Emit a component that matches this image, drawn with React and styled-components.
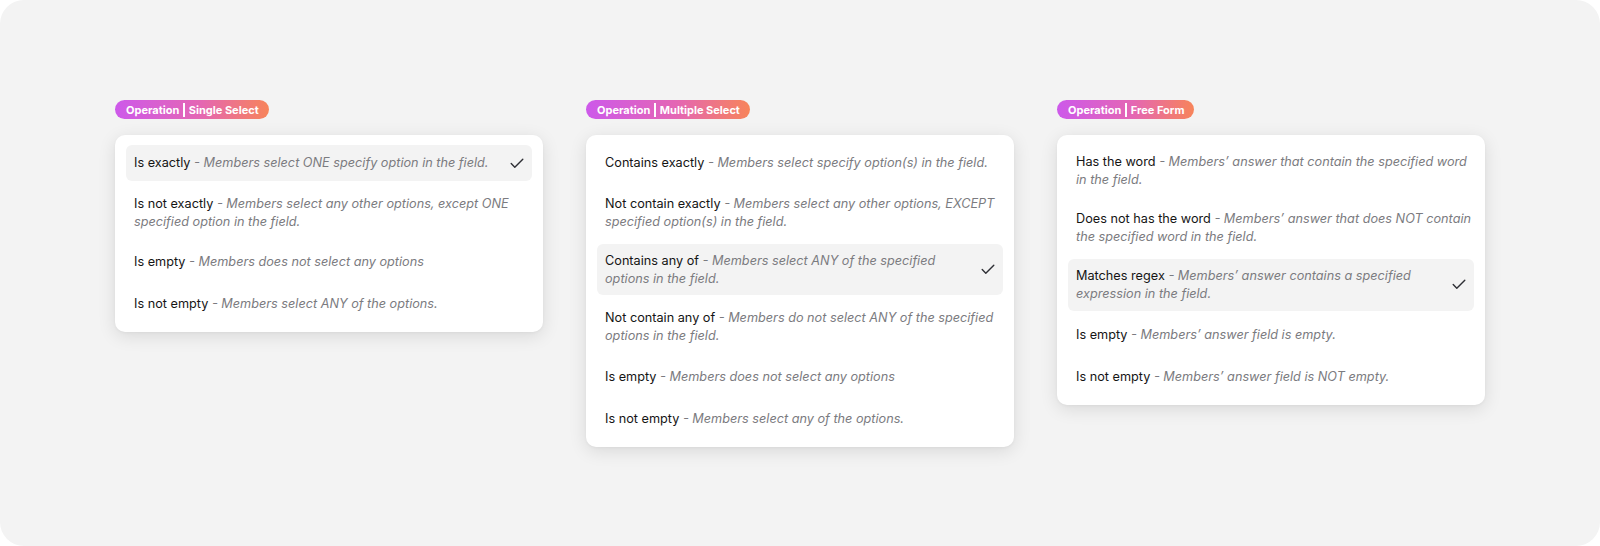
import styled, { createGlobalStyle } from 'styled-components';

const GlobalStyle = createGlobalStyle`
  html, body {
    margin: 0;
    padding: 0;
    background: #ffffff;
  }
  body {
    font-family: Inter, "Noto Sans", sans-serif;
    -webkit-font-smoothing: antialiased;
  }
`;

const Canvas = styled.div`
  width: 1600px;
  height: 546px;
  box-sizing: border-box;
  background: #f3f3f3;
  border-radius: 24px;
  padding: 100px 115px 0;
  display: grid;
  grid-template-columns: repeat(3, 428px);
  column-gap: 43px;
  align-items: start;
`;

const Column = styled.section`
  display: flex;
  flex-direction: column;
  align-items: flex-start;
  gap: 16px;
`;

const Badge = styled.div`
  display: inline-flex;
  align-items: center;
  height: 19px;
  padding: 0 10px 0 11px;
  border-radius: 10px;
  background: linear-gradient(90deg, #cd59ea 0%, #e466b4 55%, #f7845a 100%);
  color: #fff;
  font-size: 11px;
  font-weight: 700;
  white-space: nowrap;
`;

const Divider = styled.span`
  display: inline-block;
  width: 1.5px;
  height: 14px;
  margin: 0 4px;
  background: #fff;
`;

const Card = styled.div`
  width: 100%;
  box-sizing: border-box;
  background: #fff;
  border-radius: 10px;
  padding: 10px 11px;
  display: flex;
  flex-direction: column;
  gap: 6px;
  box-shadow: 0 4px 18px rgba(0, 0, 0, 0.11), 0 1px 3px rgba(0, 0, 0, 0.04);
`;

const Row = styled.div`
  display: flex;
  align-items: center;
  gap: 12px;
  min-height: 36px;
  box-sizing: border-box;
  padding: ${({ $selected }) => ($selected ? '8px 8px 8px 8px' : '8px 2px 8px 8px')};
  border-radius: 6px;
  background: ${({ $selected }) => ($selected ? '#f3f3f3' : 'transparent')};
`;

const Text = styled.div`
  flex: 1;
  font-size: 12.7px;
  line-height: 17.6px;
  color: #151515;
`;

const Desc = styled.span`
  font-style: italic;
  color: #7b7b80;
`;

const CheckMark = () => (
  <svg width="14" height="11" viewBox="0 0 14 11" fill="none">
    <path d="M1.2 5.6 L4.8 9.2 L12.8 1.2" stroke="#2e2f35" strokeWidth="1.4" strokeLinecap="round" strokeLinejoin="round" />
  </svg>
);

const groups = [
  {
    kind: 'Single Select',
    items: [
      { label: 'Is exactly', desc: 'Members select ONE specify option in the field.', selected: true },
      { label: 'Is not exactly', desc: 'Members select any other options, except ONE specified option in the field.' },
      { label: 'Is empty', desc: 'Members does not select any options' },
      { label: 'Is not empty', desc: 'Members select ANY of the options.' },
    ],
  },
  {
    kind: 'Multiple Select',
    items: [
      { label: 'Contains exactly', desc: 'Members select specify option(s) in the field.' },
      { label: 'Not contain exactly', desc: 'Members select any other options, EXCEPT specified option(s) in the field.' },
      { label: 'Contains any of', desc: 'Members select ANY of the specified options in the field.', selected: true },
      { label: 'Not contain any of', desc: 'Members do not select ANY of the specified options in the field.' },
      { label: 'Is empty', desc: 'Members does not select any options' },
      { label: 'Is not empty', desc: 'Members select any of the options.' },
    ],
  },
  {
    kind: 'Free Form',
    items: [
      { label: 'Has the word', desc: 'Members\u2019 answer that contain the specified word in the field.' },
      { label: 'Does not has the word', desc: 'Members\u2019 answer that does NOT contain the specified word in the field.' },
      { label: 'Matches regex', desc: 'Members\u2019 answer contains a specified expression in the field.', selected: true },
      { label: 'Is empty', desc: 'Members\u2019 answer field is empty.' },
      { label: 'Is not empty', desc: 'Members\u2019 answer field is NOT empty.' },
    ],
  },
];

const App = () => {
  return (
    <>
      <GlobalStyle />
      <Canvas>
        {groups.map((group) => (
          <Column key={group.kind}>
            <Badge>
              Operation<Divider />{group.kind}
            </Badge>
            <Card>
              {group.items.map((item) => (
                <Row key={item.label} $selected={item.selected}>
                  <Text>
                    {item.label} <Desc>- {item.desc}</Desc>
                  </Text>
                  {item.selected && <CheckMark />}
                </Row>
              ))}
            </Card>
          </Column>
        ))}
      </Canvas>
    </>
  );
};

export default App;
